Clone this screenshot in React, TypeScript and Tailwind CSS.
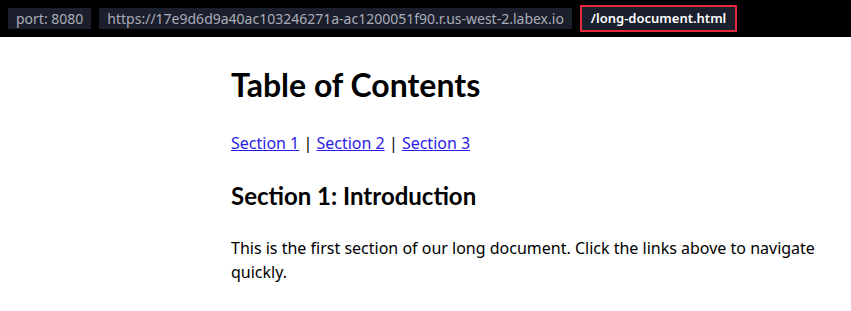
export default function App() {
  const font = { fontFamily: '"Noto Sans", "Liberation Sans", sans-serif' };
  const heading = { fontFamily: 'Lato, "Noto Sans", sans-serif' };

  return (
    <div className="min-h-screen bg-white">
      {/* Address strip */}
      <div className="flex h-[37px] items-center gap-2 bg-black px-2 font-['Noto_Sans',sans-serif] text-[14px]">
        <span className="flex h-[21px] items-center bg-[#1b1e2b] px-2 text-[#a9adb8]">
          port: 8080
        </span>
        <span className="flex h-[21px] items-center bg-[#1b1e2b] px-2 text-[#a9adb8]">
          https://17e9d6d9a40ac103246271a-ac1200051f90.r.us-west-2.labex.io
        </span>
        <span className="flex h-[27px] items-center border-2 border-[#e5293a] bg-[#1b1e2b] px-[9px] text-[13px] font-semibold text-white">
          /long-document.html
        </span>
      </div>

      {/* Document */}
      <div className="w-[600px] pl-[231px] text-black" style={font}>
        <h1 className="mt-[28px] text-[32px] font-bold leading-[40px]" style={heading}>
          Table of Contents
        </h1>
        <p className="mt-[26px] text-base leading-6">
          <a href="#s1" className="text-[#2a1be6] underline">Section 1</a> |{" "}
          <a href="#s2" className="text-[#2a1be6] underline">Section 2</a> |{" "}
          <a href="#s3" className="text-[#2a1be6] underline">Section 3</a>
        </p>
        <h2 className="mt-[25px] text-2xl font-bold leading-8" style={heading}>
          Section 1: Introduction
        </h2>
        <p className="mt-[24px] w-[600px] text-base leading-6">
          This is the first section of our long document. Click the links above to navigate quickly.
        </p>
      </div>
    </div>
  );
}
